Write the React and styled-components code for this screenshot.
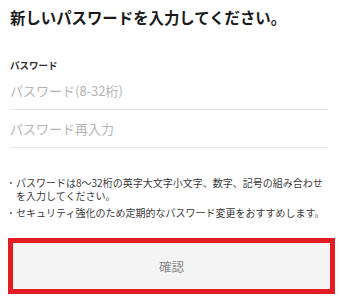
import React from "react";
import styled, { createGlobalStyle } from "styled-components";

const Global = createGlobalStyle`
  html, body { margin: 0; padding: 0; background: #fff; }
  body { font-family: "Noto Sans CJK JP", "Noto Sans", sans-serif; }
  * { box-sizing: border-box; }
`;

const Page = styled.div`
  width: 340px;
  padding: 6px 12px 0 10px;
  display: flex;
  flex-direction: column;
`;

const Title = styled.h1`
  margin: 0;
  font-size: 15.4px;
  line-height: 22px;
  font-weight: 700;
  color: #1a1a1a;
`;

const Label = styled.div`
  margin-top: 30px;
  font-size: 9.5px;
  line-height: 14px;
  font-weight: 700;
  color: #333;
`;

const Field = styled.input`
  display: block;
  width: 100%;
  height: ${(p) => p.$h}px;
  border: none;
  border-bottom: 1px solid #e6e6e6;
  padding: 0;
  outline: none;
  background: transparent;
  font-family: inherit;
  font-size: 13px;
  color: #333;
  &::placeholder { color: #b4b4b4; }
`;

const Notes = styled.ul`
  list-style: none;
  margin: 28px 0 0;
  padding: 0;
  display: flex;
  flex-direction: column;
  gap: 4px;
`;

const Note = styled.li`
  position: relative;
  padding-left: 6px;
  font-size: 10px;
  line-height: 13px;
  color: #3a3a3a;
  &::before {
    content: "";
    position: absolute;
    left: 0;
    top: 5.5px;
    width: 2px;
    height: 2px;
    border-radius: 1px;
    background: #555;
  }
`;

const Highlight = styled.div`
  margin: 19px -7px 0 -2px;
  border: 5px solid #e31b23;
`;

const Button = styled.button`
  display: flex;
  align-items: center;
  justify-content: center;
  width: 100%;
  height: 46px;
  border: none;
  background: #f4f4f4;
  font-family: inherit;
  font-size: 12.5px;
  color: #888;
  padding: 0;
`;

export default function App() {
  return (
    <>
      <Global />
      <Page>
        <Title>新しいパスワードを入力してください。</Title>
        <Label>パスワード</Label>
        <Field $h={38} type="password" placeholder="パスワード(8-32桁)" />
        <Field $h={38} type="password" placeholder="パスワード再入力" />
        <Notes>
          <Note>パスワードは8〜32桁の英字大文字小文字、数字、記号の組み合わせを入力してください。</Note>
          <Note>セキュリティ強化のため定期的なパスワード変更をおすすめします。</Note>
        </Notes>
        <Highlight>
          <Button>確認</Button>
        </Highlight>
      </Page>
    </>
  );
}
